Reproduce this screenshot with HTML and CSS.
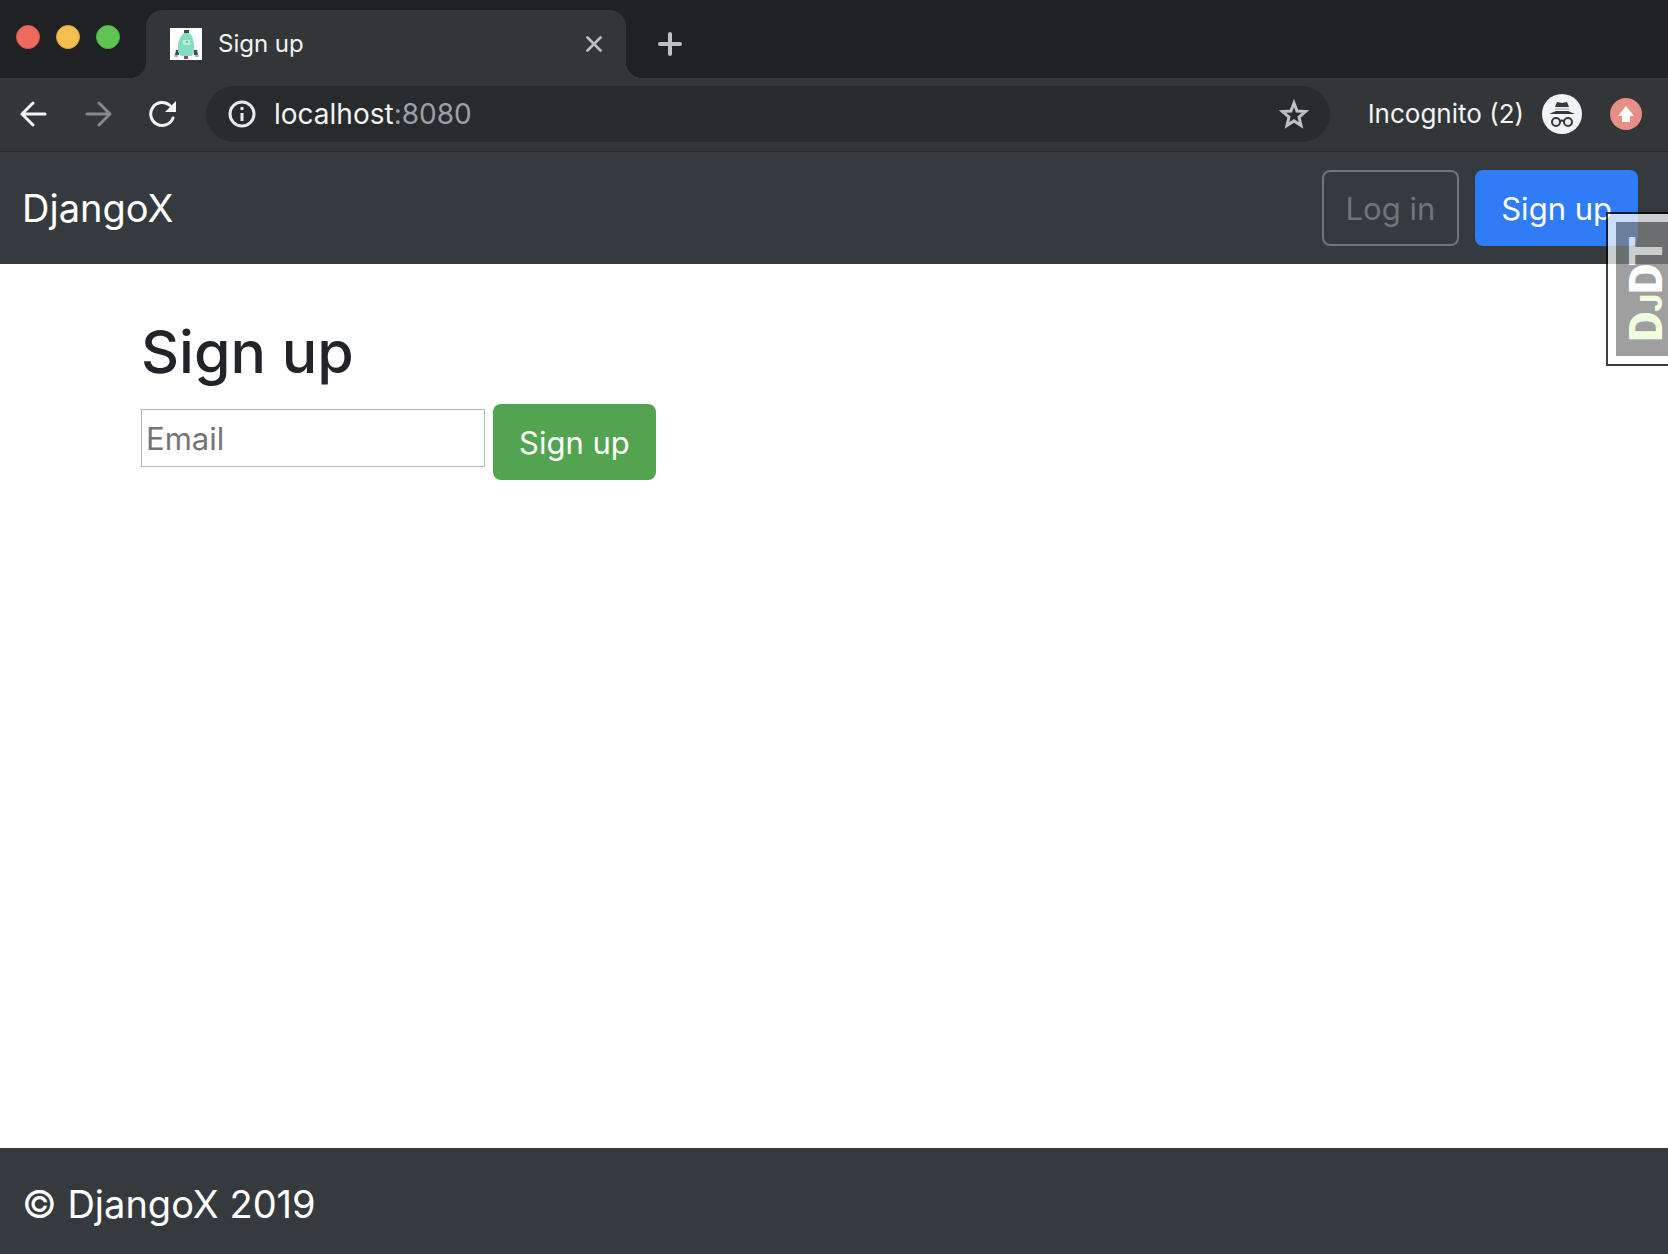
FILE: index.html
```html
<!DOCTYPE html>
<html lang="en">
<head>
<meta charset="utf-8">
<title>Sign up</title>
<link rel="stylesheet" href="styles.css">
</head>
<body>
<header class="browser">
  <div class="tab-strip">
    <div class="window-controls">
      <button class="dot dot-close" aria-label="Close window"></button>
      <button class="dot dot-minimize" aria-label="Minimize window"></button>
      <button class="dot dot-zoom" aria-label="Zoom window"></button>
    </div>
    <div class="tab">
      <svg class="favicon" viewBox="0 0 32 32" aria-hidden="true">
        <path fill="#fff" d="M0 0h32v32H0z"/>
        <path fill="#444a4b" d="M14 2h5v4h-5zM6 22h3v5H5zM24 22h3l1 5h-4z"/>
        <path fill="#b5bbba" d="M4 27h4v2H4zM25 27h4v2h-4z"/>
        <path fill="#86dcc0" d="M14 5h5l3 3 2 7v9l-2 4H11l-3-4v-9l3-7z"/>
        <path fill="#b9efe0" d="M13 12h7v5h-7z"/>
        <path fill="#63bda1" d="M16 13h2v2h-2z"/>
        <path fill="#b3405c" d="M14 28h4v3h-4z"/>
      </svg>
      <span class="tab-title">Sign up</span>
      <button class="icon-button tab-close" aria-label="Close tab">
        <svg width="16" height="16" viewBox="0 0 16 16"><path d="M1.500 1.500l13 13M14.500 1.500l-13 13" stroke="#bdc0c3" stroke-width="2.600" stroke-linecap="round"/></svg>
      </button>
    </div>
    <button class="icon-button new-tab" aria-label="New tab">
      <svg width="24" height="24" viewBox="0 0 24 24"><path d="M12 2v20M2 12h20" stroke="#bdc1c6" stroke-width="4" stroke-linecap="round"/></svg>
    </button>
  </div>
  <div class="toolbar">
    <div class="nav-buttons">
      <button class="icon-button" aria-label="Back">
        <svg width="28" height="28" viewBox="0 0 28 28"><path d="M25 14H2M13 3L2 14l11 11" fill="none" stroke="#f1f3f4" stroke-width="3" stroke-linecap="round"/></svg>
      </button>
      <button class="icon-button" aria-label="Forward">
        <svg width="28" height="28" viewBox="0 0 28 28"><path d="M3 14h23M15 3l11 11-11 11" fill="none" stroke="#85888a" stroke-width="3" stroke-linecap="round"/></svg>
      </button>
      <button class="icon-button" aria-label="Reload">
        <svg width="28" height="28" viewBox="0 0 28 28"><path d="M25 18A11.500 11.500 0 1 1 22 5.500" fill="none" stroke="#f1f3f4" stroke-width="3" stroke-linecap="round"/><path d="M28 1v11H17z" fill="#f1f3f4"/></svg>
      </button>
    </div>
    <div class="address">
      <svg width="28" height="28" viewBox="0 0 28 28" aria-hidden="true"><circle cx="14" cy="14" r="12" fill="none" stroke="#e8eaed" stroke-width="3"/><path d="M14 7v3M14 13v8" stroke="#e8eaed" stroke-width="3"/></svg>
      <span class="url">localhost<span class="port">:8080</span></span>
      <button class="icon-button" aria-label="Bookmark this page">
        <svg width="30" height="30" viewBox="0 0 30 30"><path d="M15 4l3 8 8.500.600-6.500 5.500 2 8.300-7-4.500-7 4.500 2-8.300-6.500-5.500L12 12z" fill="none" stroke="#bdc1c6" stroke-width="3"/></svg>
      </button>
    </div>
    <div class="profile">
      <span>Incognito (2)</span>
      <svg width="40" height="40" viewBox="0 0 40 40" aria-hidden="true"><circle cx="20" cy="20" r="20" fill="#f1f3f4"/><path d="M15 8l5 1 5-1 2 5H13zM7 20l7-3h12l7 3z" fill="#34383b"/><path d="M13 14h14v2H13z" fill="#c9cccd"/><g fill="none" stroke="#34383b" stroke-width="2"><circle cx="14" cy="28" r="4"/><circle cx="26" cy="28" r="4"/><path d="M18 27q2-1 4 0"/></g></svg>
    </div>
    <button class="icon-button" aria-label="Update available">
      <svg width="32" height="32" viewBox="0 0 32 32"><circle cx="16" cy="16" r="16" fill="#e58f86"/><path d="M16 8l8 10h-4v6h-8v-6H8z" fill="#fff"/></svg>
    </button>
  </div>
</header>
<nav class="navbar">
  <a class="brand" href="#">DjangoX</a>
  <div class="nav-actions">
    <a class="btn btn-outline" href="#">Log in</a>
    <a class="btn btn-primary" href="#">Sign up</a>
  </div>
  <a class="debug-handle" href="#" aria-label="Show debug toolbar"><span class="debug-label"><span><span class="debug-accent">D<span class="debug-small">J</span></span>DT</span></span></a>
</nav>
<main class="content">
  <h1>Sign up</h1>
  <form class="signup-form">
    <input class="email" type="email" placeholder="Email" aria-label="Email">
    <button class="btn btn-success" type="submit">Sign up</button>
  </form>
</main>
<footer class="footer">© DjangoX 2019</footer>
</body>
</html>
```
FILE: styles.css
```css
* { box-sizing: border-box; }

body {
  margin: 0;
  min-height: 100vh;
  display: flex;
  flex-direction: column;
  background: #fff;
  color: #212529;
  font-family: Inter, "Liberation Sans", sans-serif;
  font-size: 31px;
  line-height: 48px;
}

button, input { font: inherit; }
a { color: inherit; text-decoration: none; }
svg { display: block; flex: none; }

.icon-button {
  padding: 0;
  border: 0;
  background: none;
}

/* Browser window */
.browser {
  background: #333639;
  border-bottom: 1px solid #27292b;
}

.tab-strip {
  display: flex;
  height: 78px;
  padding-top: 10px;
  background: #202124;
}

.window-controls {
  display: flex;
  gap: 16px;
  width: 146px;
  padding: 15px 16px;
}

.dot {
  width: 24px;
  height: 24px;
  padding: 0;
  border: 1px solid;
  border-radius: 50%;
}

.dot-close { background: #ed6a5e; border-color: #d9564a; }
.dot-minimize { background: #f5bf4f; border-color: #dba53a; }
.dot-zoom { background: #61c554; border-color: #4fb03f; }

.tab {
  position: relative;
  display: flex;
  align-items: center;
  gap: 16px;
  width: 480px;
  padding: 0 24px;
  border-radius: 16px 16px 0 0;
  background: #333639;
  color: #f1f3f4;
  font-size: 24px;
}

.tab::before,
.tab::after {
  content: "";
  position: absolute;
  bottom: 0;
  width: 16px;
  height: 16px;
}

.tab::before {
  right: 100%;
  background: radial-gradient(circle at 0 0, transparent 16px, #333639 16px);
}

.tab::after {
  left: 100%;
  background: radial-gradient(circle at 100% 0, transparent 16px, #333639 16px);
}

.favicon { width: 32px; height: 32px; }
.tab-title { flex: 1; }
.new-tab { margin-left: 32px; }

.toolbar {
  display: flex;
  align-items: center;
  gap: 28px;
  height: 73px;
  padding: 0 26px 1px 20px;
  color: #f1f3f4;
  font-size: 26px;
}

.nav-buttons {
  display: flex;
  gap: 36px;
  margin-right: 2px;
}

.address {
  flex: 1;
  display: flex;
  align-items: center;
  gap: 18px;
  height: 56px;
  padding: 0 21px 0 22px;
  border-radius: 28px;
  background: #282b2e;
  font-size: 28px;
}

.url { flex: 1; }
.port { color: #9aa0a6; }

.profile {
  display: flex;
  align-items: center;
  gap: 18px;
  padding-left: 10px;
}

/* Site */
.navbar {
  position: relative;
  display: flex;
  align-items: center;
  justify-content: space-between;
  padding: 18px 30px 18px 22px;
  background: #353a3e;
}

.brand {
  color: #fff;
  font-size: 38px;
}

.nav-actions {
  display: flex;
  gap: 16px;
}

.btn {
  padding: 13px 24px 11px;
  border: 2px solid transparent;
  border-radius: 8px;
  color: #fff;
}

.btn-outline {
  padding-inline: 22px;
  border-color: #6c757d;
  color: #6c757d;
}

.btn-primary { background: #2f7cf6; }
.btn-success { background: #53a451; }

.debug-handle {
  position: absolute;
  top: 60px;
  right: 0;
  z-index: 1;
  width: 62px;
  height: 154px;
  padding: 8px 0 8px 8px;
  border: 2px solid #000;
  border-right: 0;
  background: #fff;
  opacity: 0.75;
}

.debug-label {
  display: flex;
  align-items: flex-start;
  justify-content: center;
  height: 100%;
  padding-left: 8px;
  background: #7f7f7f;
  color: #fff;
  font-family: Roboto, sans-serif;
  font-size: 47px;
  font-weight: 900;
  line-height: 44px;
  writing-mode: sideways-lr;
}

.debug-accent { color: #ebffd5; }
.debug-small { font-size: 31px; line-height: 1; }

.content {
  flex: 1;
  padding: 50px 141px;
}

h1 {
  margin: 0 0 14px;
  font-size: 59px;
  font-weight: 500;
  line-height: 76px;
}

.signup-form {
  display: flex;
  align-items: flex-start;
  gap: 8px;
}

.email {
  width: 344px;
  height: 58px;
  margin-top: 5px;
  padding: 2px 4px;
  border: 1px solid #b8bbbd;
  color: #212529;
}

.email::placeholder { color: #757575; }

.footer {
  padding: 32px 22px 26px;
  background: #353a3e;
  color: #fff;
  font-size: 38px;
}
```
